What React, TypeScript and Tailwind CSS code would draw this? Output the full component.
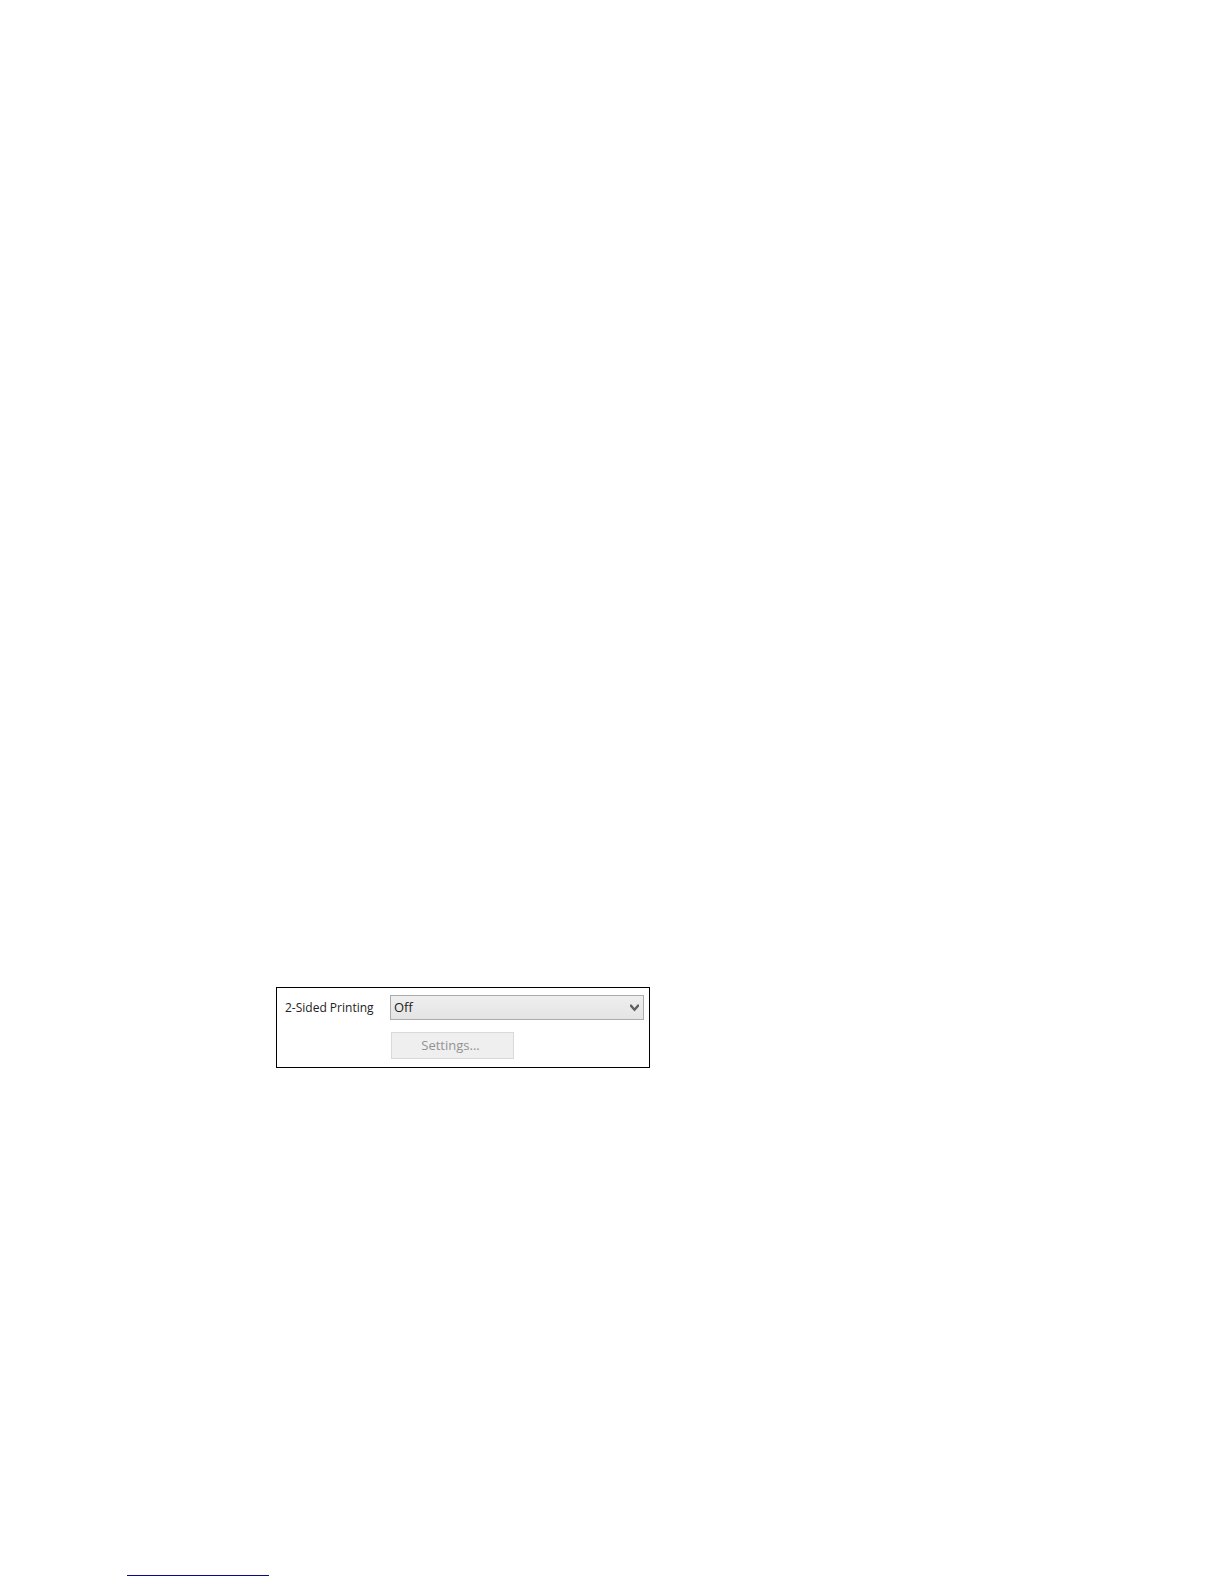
import { useState } from "react";
import clsx from "clsx";

const modes = ["Off", "2-Sided", "Booklet"];

export default function App() {
  const [mode, setMode] = useState("Off");
  const off = mode === "Off";

  return (
    <div className="flex min-h-screen flex-col justify-between bg-white font-['Open_Sans','Noto_Sans',sans-serif] text-xs text-[#222]">
      <main className="pt-[987px] pr-6 pl-[276px]">
        <form className="flex w-full max-w-[374px] flex-col gap-3 border border-black pt-[7px] pr-[5px] pb-2 pl-2">
          <div className="flex items-center">
            <label htmlFor="sided" className="w-[105px] shrink-0">
              2-Sided Printing
            </label>
            <div className="relative grow">
              <select
                id="sided"
                value={mode}
                onChange={(e) => setMode(e.target.value)}
                className="block h-[25px] w-full appearance-none border border-[#acacac] bg-linear-to-b from-[#efefef] to-[#e4e4e4] pr-6 pl-[3px] text-[13px]"
              >
                {modes.map((m) => (
                  <option key={m}>{m}</option>
                ))}
              </select>
              <svg
                viewBox="0 0 9 8"
                className="pointer-events-none absolute top-[9px] right-[5px] h-2 w-[9px]"
                fill="#606060"
              >
                <path d="M0 0.5 L1.5 0.5 L4.5 4 L7.5 0.5 L9 0.5 L9 2.5 L4.5 7.5 L0 2.5 Z" />
              </svg>
            </div>
          </div>
          <button
            type="button"
            disabled={off}
            className={clsx(
              "ml-[106px] h-[27px] w-[123px] border border-[#d9d9d9] bg-[#efefef] pr-1 text-[13px]",
              off && "text-[#929292]"
            )}
          >
            Settings...
          </button>
        </form>
      </main>
      <footer className="pb-2 pl-[127px]">
        <hr className="w-[142px] border-t border-[#08088a]" />
      </footer>
    </div>
  );
}
